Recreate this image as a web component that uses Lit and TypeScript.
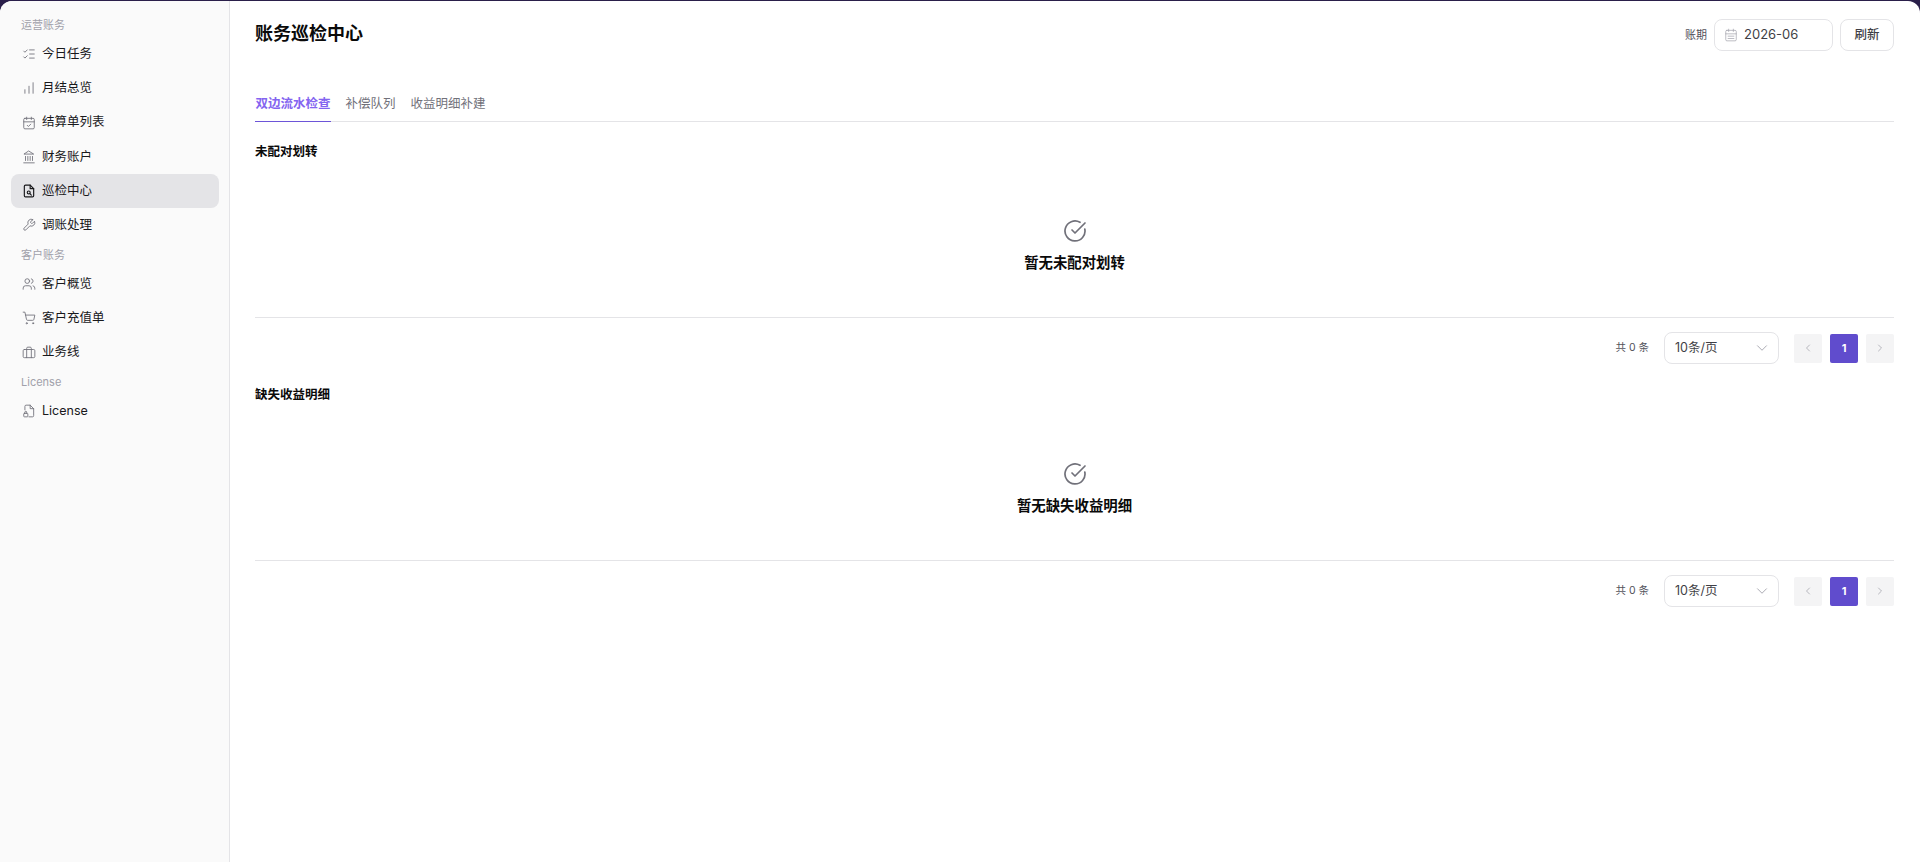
import { LitElement, html, css, svg } from "lit";
import { customElement } from "lit/decorators.js";

const ic = (body: unknown, size = 14, sw = 1.5) => html`<svg class="ic" width=${size} height=${size} viewBox="0 0 24 24" fill="none" stroke="currentColor" stroke-width=${sw} stroke-linecap="round" stroke-linejoin="round">${body}</svg>`;

const icons: Record<string, unknown> = {
  tasks: svg`<path d="M13 5h8M13 12h8M13 19h8M3 17l2 2 4-4M3 7l2 2 4-4"/>`,
  chart: svg`<path d="M5 21v-6M12 21V9M19 21V3"/>`,
  cal: svg`<path d="M8 2v4M16 2v4M3 10h18M9 16l2 2 4-4"/><rect x="3" y="4" width="18" height="18" rx="2"/>`,
  bank: svg`<path d="M3 22h18M6 18v-7M10 18v-7M14 18v-7M18 18v-7M12 2l8 5H4z"/>`,
  doc: svg`<path d="M14 2H6a2 2 0 0 0-2 2v16a2 2 0 0 0 2 2h12a2 2 0 0 0 2-2V8z"/><path d="M14 2v6h6"/><circle cx="11.5" cy="14.5" r="2.5"/><path d="M13.5 16.5L16 19"/>`,
  wrench: svg`<path d="M14.7 6.3a1 1 0 0 0 0 1.4l1.6 1.6a1 1 0 0 0 1.4 0l3.77-3.77a6 6 0 0 1-7.94 7.94l-6.91 6.91a2.12 2.12 0 0 1-3-3l6.91-6.91a6 6 0 0 1 7.94-7.94z"/>`,
  users: svg`<path d="M16 21v-2a4 4 0 0 0-4-4H6a4 4 0 0 0-4 4v2"/><circle cx="9" cy="7" r="4"/><path d="M22 21v-2a4 4 0 0 0-3-3.87M16 3.13a4 4 0 0 1 0 7.75"/>`,
  cart: svg`<circle cx="8" cy="21" r="1"/><circle cx="19" cy="21" r="1"/><path d="M2 2h3l2.7 12.4a2 2 0 0 0 2 1.6h8.7a2 2 0 0 0 2-1.6L22 7H6"/>`,
  case: svg`<path d="M16 20V4a2 2 0 0 0-2-2h-4a2 2 0 0 0-2 2v16"/><rect x="2" y="6" width="20" height="14" rx="2"/>`,
  lic: svg`<path d="M12 22h6a2 2 0 0 0 2-2V8l-6-6H7a2 2 0 0 0-2 2v6"/><path d="M14 2v6h6"/><rect x="3" y="16" width="7" height="6" rx="1"/><path d="M5 16v-2a1.5 1.5 0 0 1 3 0v2"/>`,
};

const nav: Array<{ group: string; items: Array<[string, string, boolean?]> }> = [
  { group: "运营账务", items: [["tasks", "今日任务"], ["chart", "月结总览"], ["cal", "结算单列表"], ["bank", "财务账户"], ["doc", "巡检中心", true], ["wrench", "调账处理"]] },
  { group: "客户账务", items: [["users", "客户概览"], ["cart", "客户充值单"], ["case", "业务线"]] },
  { group: "License", items: [["lic", "License"]] },
];

@customElement("app-root")
export class AppRoot extends LitElement {
  static styles = css`
    :host { display: block; height: 862px; background: #2a1f4a; font-family: Inter, "Noto Sans CJK SC", sans-serif; line-height: 1.5; overflow: hidden; color: #0a0a0a; }
    .frame { margin-top: 1px; height: 861px; display: flex; background: #fff; border-radius: 12px 12px 0 0; overflow: hidden; }
    .side { flex: none; box-sizing: content-box; width: 208px; background: #fafafa; border-right: 1px solid #e4e4e7; padding: 11.5px 10px 0 11px; display: flex; flex-direction: column; }
    .group { height: 24.5px; flex: none; font-size: 11px; line-height: 24px; color: #a1a1aa; padding-left: 10px; }
    .item { height: 34.25px; flex: none; display: flex; align-items: center; gap: 6px; padding-left: 11px; border-radius: 8px; font-size: 12.5px; color: #18181b; }
    .item .ic { color: #71717a; flex: none; }
    .item.on { background: #e4e4e7; }
    .item.on .ic { color: #18181b; stroke-width: 2; }
    .main { flex: 1; min-width: 0; padding: 0 26px 0 25px; }
    .head { height: 69px; display: flex; align-items: flex-start; justify-content: space-between; }
    h1 { margin: 0; padding-top: 21px; font-size: 18px; line-height: 24px; font-weight: 600; color: #0a0a0a; }
    .tools { display: flex; align-items: center; gap: 7px; padding-top: 18px; }
    .lbl { font-size: 11px; color: #52525b; }
    .date { width: 119px; height: 32px; box-sizing: border-box; border: 1px solid #e4e4e7; border-radius: 8px; display: flex; align-items: center; gap: 6px; padding-left: 9px; font-size: 13px; color: #3f3f46; }
    .date .ic { color: #a1a1aa; }
    .btn { width: 54px; height: 32px; box-sizing: border-box; border: 1px solid #e4e4e7; border-radius: 8px; display: flex; align-items: center; justify-content: center; font-size: 12.5px; font-weight: 500; color: #3f3f46; }
    .tabs { display: flex; gap: 14px; border-bottom: 1px solid #e4e4e7; height: 52px; box-sizing: border-box; padding-top: 16px; font-size: 12.5px; color: #71717a; }
    .tab { height: 36px; line-height: 36px; padding: 0 0.5px; }
    .tab.on { color: #8464f0; font-weight: 600; box-shadow: inset 0 -1px 0 #6d55d8; }
    .sec { font-size: 12.5px; font-weight: 600; line-height: 18px; padding-top: 1px; color: #0a0a0a; }
    .s1 { margin-top: 20px; }
    .s2 { margin-top: 7px; }
    .empty { height: 157px; display: flex; flex-direction: column; align-items: center; padding-top: 58px; box-sizing: border-box; border-bottom: 1px solid #e4e4e7; }
    .empty .ic { color: #71717a; }
    .empty b { margin-top: 9px; font-size: 14.4px; line-height: 22px; font-weight: 600; color: #0a0a0a; }
    .pager { height: 60px; display: flex; align-items: center; justify-content: flex-end; font-size: 10.5px; color: #52525b; }
    .total { margin-right: 15px; }
    .sel { width: 115px; height: 32px; box-sizing: border-box; border: 1px solid #e4e4e7; border-radius: 8px; display: flex; align-items: center; justify-content: space-between; padding: 0 7px 0 10px; font-size: 12.5px; color: #3f3f46; margin-right: 15px; }
    .sel .ic { color: #a1a1aa; }
    .pg { width: 28px; height: 29px; margin-left: 8px; border-radius: 2px; background: #f4f4f5; display: flex; align-items: center; justify-content: center; color: #a1a1aa; }
    .pg.first { margin-left: 0; }
    .pg.on { background: #604ccd; color: #fff; font-size: 11px; font-weight: 700; }
  `;

  private block(title: string, cls: string, msg: string) {
    return html`
      <div class="sec ${cls}">${title}</div>
      <div class="empty">
        ${ic(svg`<path d="M21.8 10A10 10 0 1 1 17 3.3"/><path d="M9 11l3 3L22 4"/>`, 24, 1.7)}
        <b>${msg}</b>
      </div>
      <div class="pager">
        <span class="total">共 0 条</span>
        <div class="sel"><span>10条/页</span>${ic(svg`<path d="M6 9l6 6 6-6"/>`, 18, 1.2)}</div>
        <div class="pg first">${ic(svg`<path d="M15 18l-6-6 6-6"/>`, 12)}</div>
        <div class="pg on">1</div>
        <div class="pg">${ic(svg`<path d="M9 18l6-6-6-6"/>`, 12)}</div>
      </div>`;
  }

  render() {
    return html`<div class="frame">
      <aside class="side">
        ${nav.map((g) => html`<div class="group">${g.group}</div>
          ${g.items.map(([i, t, on]) => html`<div class="item ${on ? "on" : ""}">${ic(icons[i])}<span>${t}</span></div>`)}`)}
      </aside>
      <main class="main">
        <div class="head">
          <h1>账务巡检中心</h1>
          <div class="tools">
            <span class="lbl">账期</span>
            <div class="date">${ic(svg`<rect x="3" y="4" width="18" height="18" rx="2"/><path d="M8 2v4M16 2v4M3 10h18M7 14h10M7 18h10"/>`, 14, 1.2)}<span>2026-06</span></div>
            <div class="btn">刷新</div>
          </div>
        </div>
        <div class="tabs">
          <div class="tab on">双边流水检查</div><div class="tab">补偿队列</div><div class="tab">收益明细补建</div>
        </div>
        ${this.block("未配对划转", "s1", "暂无未配对划转")}
        ${this.block("缺失收益明细", "s2", "暂无缺失收益明细")}
      </main>
    </div>`;
  }
}
